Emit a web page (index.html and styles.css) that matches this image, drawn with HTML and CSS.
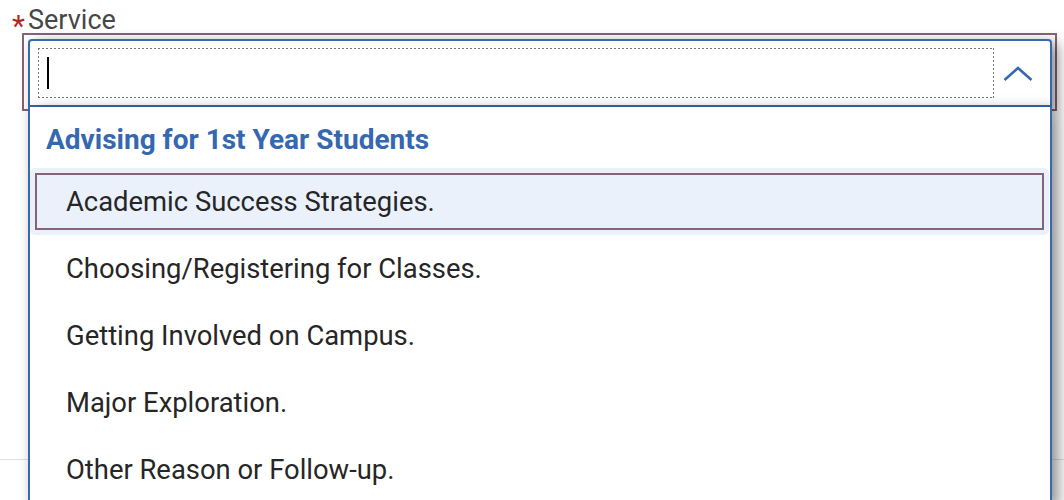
FILE: index.html
```html
<!DOCTYPE html>
<html lang="en">
<head>
<meta charset="utf-8">
<title>Service</title>
<link rel="stylesheet" href="styles.css">
</head>
<body>
<div class="field">
  <div class="label"><span class="req">*</span>Service</div>
  <div class="combo">
    <div class="control">
      <div class="input"><span class="caret"></span></div>
      <svg class="chev" width="30" height="15" viewBox="0 0 30 15" aria-hidden="true">
        <path d="M1.5 14 L15 2 L28.5 14" fill="none" stroke="#3768b0" stroke-width="2.6"/>
      </svg>
    </div>
    <div class="listbox">
      <div class="group">Advising for 1st Year Students</div>
      <div class="option active">Academic Success Strategies.</div>
      <div class="option">Choosing/Registering for Classes.</div>
      <div class="option">Getting Involved on Campus.</div>
      <div class="option">Major Exploration.</div>
      <div class="option">Other Reason or Follow-up.</div>
    </div>
  </div>
</div>
<div class="below"></div>
</body>
</html>
```

FILE: styles.css
```css
html, body {
  margin: 0;
  padding: 0;
  overflow: hidden;
  background: #fff;
}
body {
  font-family: Roboto, "Liberation Sans", sans-serif;
  width: 1064px;
  height: 500px;
}
.label {
  box-sizing: border-box;
  height: 33px;
  font-size: 27px;
  line-height: 25px;
  padding-top: 8px;
  padding-left: 12px;
  color: #474747;
  white-space: nowrap;
}
.req {
  display: inline-block;
  width: 16px;
  height: 0;
  line-height: 0;
  color: #b3261e;
  font-size: 30px;
  vertical-align: top;
  transform: translateY(18px);
}
.combo {
  position: relative;
  margin-left: 22px;
  width: 1024px;
  border: 2px solid #866478;
  padding: 4px 3px 2px 4px;
}
.control {
  position: relative;
  z-index: 1;
  display: flex;
  align-items: center;
  height: 64px;
  border: 2px solid #3768b0;
  border-radius: 4px 4px 0 0;
  padding-left: 8px;
  background: #fff;
  box-shadow: 6px 4px 14px rgba(0, 0, 0, 0.45);
}
.input {
  flex: 1;
  height: 50px;
  display: flex;
  align-items: center;
  margin-top: -1px;
  background:
    repeating-linear-gradient(90deg, #777 0 2px, transparent 2px 4px) left top / 100% 1px no-repeat,
    repeating-linear-gradient(90deg, #777 0 2px, transparent 2px 4px) left bottom / 100% 1px no-repeat,
    repeating-linear-gradient(180deg, #777 0 2px, transparent 2px 4px) left top / 1px 100% no-repeat,
    repeating-linear-gradient(180deg, #777 0 2px, transparent 2px 4px) right top / 1px 100% no-repeat;
}
.caret {
  width: 2px;
  height: 32px;
  margin-left: 9px;
  background: #000;
}
.chev {
  display: block;
  margin-left: 9px;
  margin-right: 17px;
}
.listbox {
  position: absolute;
  z-index: 2;
  left: 4px;
  right: 3px;
  top: 72px;
  background: #fff;
  border: 2px solid #3768b0;
  border-top: none;
  box-shadow: 6px 4px 14px rgba(0, 0, 0, 0.45);
}
.group {
  height: 61px;
  line-height: 65px;
  padding-left: 16px;
  font-size: 28px;
  font-weight: 700;
  color: #3468b0;
  white-space: nowrap;
}
.option {
  height: 67px;
  line-height: 69px;
  padding-left: 36px;
  margin-right: 1px;
  font-size: 27.4px;
  color: #262626;
  border-radius: 5px;
  white-space: nowrap;
}
.option.active {
  background: #eaf1fb;
  outline: 2px solid #866478;
  outline-offset: -7px;
}
.below {
  margin-top: 348px;
  border-top: 1px solid #e0e0e0;
}
```
